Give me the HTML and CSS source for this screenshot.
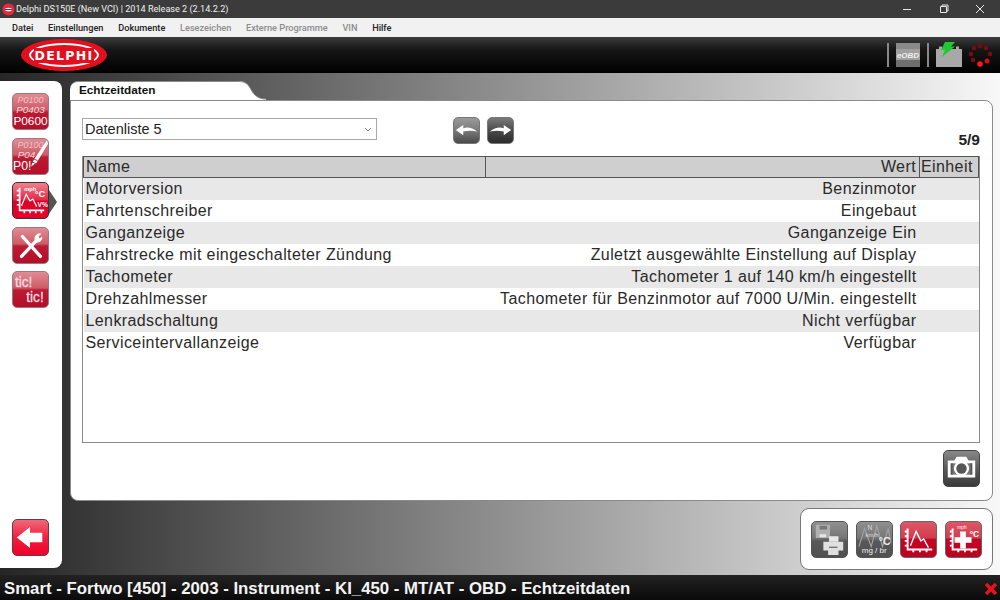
FILE: index.html
```html
<!DOCTYPE html>
<html lang="de">
<head>
<meta charset="utf-8">
<title>Delphi DS150E</title>
<link rel="stylesheet" href="styles.css">
</head>
<body>
<div class="app">
  <div class="titlebar">
    <svg class="appicon" width="13" height="13" viewBox="0 0 13 13"><circle cx="6.5" cy="6.5" r="6" fill="#e8283c"/><ellipse cx="6.5" cy="6.5" rx="3.6" ry="1.8" fill="#fff"/><rect x="3" y="6" width="7" height="1" fill="#c01020"/></svg>
    <span class="apptitle">Delphi DS150E (New VCI) | 2014 Release 2 (2.14.2.2)</span>
    <div class="winbtns">
      <svg width="10" height="10" viewBox="0 0 10 10"><path d="M1 5.500H9" stroke="#e8e8e8" fill="none"/></svg>
      <svg width="10" height="10" viewBox="0 0 10 10"><path d="M1.500 2.500h6v6h-6zM3 2.500V1h6v6H7.500" stroke="#e8e8e8" fill="none"/></svg>
      <svg width="10" height="10" viewBox="0 0 10 10"><path d="M1 1L9 9M9 1L1 9" stroke="#e8e8e8" fill="none"/></svg>
    </div>
  </div>
  <nav class="menubar">
    <span>Datei</span><span>Einstellungen</span><span>Dokumente</span><span class="off">Lesezeichen</span><span class="off">Externe Programme</span><span class="off">VIN</span><span>Hilfe</span>
  </nav>
  <header class="header">
    <div class="logo"><span>DELPHI</span></div>
    <div class="status">
      <i class="sep"></i>
      <div class="eobd"><span>eOBD</span></div>
      <i class="sep"></i>
      <svg width="26" height="26" viewBox="0 0 26 26"><path d="M0 7h3V4.500h3V7h14V4.500h3V7h3v18H0z" fill="#a8a8a8"/><path d="M9 0h10l-4 4.500h4L6 15l3-7H5z" fill="#22c832"/></svg>
      <svg class="spinner" width="24" height="24" viewBox="0 0 24 24"><g fill="#7a0c10"><circle cx="12" cy="3" r="2.300"/><circle cx="6" cy="5" r="2.300"/><circle cx="18" cy="5" r="2.300"/><circle cx="22" cy="11" r="2.300"/><circle cx="3" cy="11" r="2.300"/><circle cx="5" cy="17" r="2.300"/></g><circle cx="19" cy="18" r="2.500" fill="#d01014"/><circle cx="12" cy="21" r="2.800" fill="#ff1a1a"/></svg>
    </div>
  </header>
  <main class="workspace">
    <aside class="sidebar">
      <div class="sideicons">
        <div class="btn red"><svg viewBox="0 0 37 37"><text class="mid" x="18.500" y="10" font-size="9.500" fill="#eec0c6" font-style="italic">P0100</text><text class="mid" x="18.500" y="20.500" font-size="10.500" fill="#f4dade" font-style="italic">P0403</text><text class="mid" x="18.500" y="33" font-size="12.500" fill="#fff">P0600</text></svg></div>
        <div class="btn red"><svg viewBox="0 0 37 37"><text class="mid" x="18.500" y="10" font-size="9.500" fill="#eec0c6" font-style="italic">P0100</text><text class="sans" x="5" y="20.500" font-size="10.500" fill="#f4dade" font-style="italic">P04</text><text class="sans" x="0" y="33" font-size="13" fill="#fff">P0!</text><path d="M36 1L22 22l-3 7 6-4 12-20z" fill="#fff"/><path d="M20 24l4 2M22 21l4 2" stroke="#b03040" fill="none"/></svg></div>
        <div class="btn selected"><svg viewBox="0 0 37 37"><path d="M7 5V29H33M4 8H7M4 13H7M4 18H7M4 23H7M12 29v3M18 29v3M24 29v3M30 29v3" stroke="#fff" stroke-width="1.800" fill="none"/><path d="M9 24L14 12l4 7 3-2 4 8" stroke="#fff" stroke-width="1.300" fill="none"/><text class="sans" x="12" y="8" font-size="6" font-weight="700" fill="#fff">mph</text><text class="sans" x="23" y="15" font-size="10" font-weight="700" fill="#fff">°C</text><text class="sans" x="26" y="25" font-size="7" font-weight="700" fill="#fff">V%</text></svg></div>
        <div class="btn red"><svg viewBox="0 0 37 37"><path d="M10 9L29 30" stroke="#fff" stroke-width="3.500" stroke-linecap="round"/><path d="M26 12L9 30" stroke="#fff" stroke-width="3.500" stroke-linecap="round"/><path d="M23 13a5.500 5.500 0 0 1 7-7l-3 3 1 2 3-2a5.500 5.500 0 0 1-7 6z" fill="#fff"/></svg></div>
        <div class="btn red"><svg viewBox="0 0 37 37"><text class="sans" x="2" y="16" font-size="14.500" fill="#f6dde0" stroke="#f6dde0" stroke-width=".3">tic!</text><text class="sans" x="14" y="32" font-size="14.500" fill="#f6dde0" stroke="#f6dde0" stroke-width=".3">tic!</text></svg></div>
        <div class="pointer"></div>
      </div>
      <div class="btn back"><svg viewBox="0 0 37 37"><path d="M4 18.500L18 7.500v6h13v10H18v6z" fill="#fff"/></svg></div>
    </aside>
    <div class="content">
      <div class="tabrow">
        <div class="tab">Echtzeitdaten</div>
        <svg class="tabcurve" width="28" height="19" viewBox="0 0 28 20" preserveAspectRatio="none"><path d="M0 0C7 0 10 3 13 9S20 19 28 19V20H0z" fill="#fff"/><path d="M0 0.500C7 .5 10 3 13 9S20 19 28 19" fill="none" stroke="#8a8a8a"/></svg>
      </div>
      <section class="panel">
        <div class="controls">
          <div class="select"><span>Datenliste 5</span><svg width="8" height="5" viewBox="0 0 8 5"><path d="M1 1l3 3 3-3" stroke="#888" fill="none"/></svg></div>
          <div class="navbtns">
            <div class="btn nav"><svg viewBox="0 0 27 27"><path d="M2 13l8-5.500v3.500c5-1.500 10-.5 15 3.500-5-1-10-1-15 0v4z" fill="#fff"/></svg></div>
            <div class="btn nav darker"><svg viewBox="0 0 27 27"><path d="M25 13l-8-5.500v3.500c-5-1.500-10-.5-15 3.500 5-1 10-1 15 0v4z" fill="#fff"/></svg></div>
          </div>
          <div class="count">5/9</div>
        </div>
        <div class="tablewrap">
          <table class="grid">
            <thead><tr><th class="c1">Name</th><th class="c2">Wert</th><th class="c3">Einheit</th></tr></thead>
            <tbody>
              <tr><td>Motorversion</td><td class="v">Benzinmotor</td><td></td></tr>
              <tr><td>Fahrtenschreiber</td><td class="v">Eingebaut</td><td></td></tr>
              <tr><td>Ganganzeige</td><td class="v">Ganganzeige Ein</td><td></td></tr>
              <tr><td>Fahrstrecke mit eingeschalteter Zündung</td><td class="v">Zuletzt ausgewählte Einstellung auf Display</td><td></td></tr>
              <tr><td>Tachometer</td><td class="v">Tachometer 1 auf 140 km/h eingestellt</td><td></td></tr>
              <tr><td>Drehzahlmesser</td><td class="v">Tachometer für Benzinmotor auf 7000 U/Min. eingestellt</td><td></td></tr>
              <tr><td>Lenkradschaltung</td><td class="v">Nicht verfügbar</td><td></td></tr>
              <tr><td>Serviceintervallanzeige</td><td class="v">Verfügbar</td><td></td></tr>
            </tbody>
          </table>
        </div>
        <div class="panelfoot">
          <div class="btn dark"><svg viewBox="0 0 37 37"><path d="M11 10l2.500-4h10l2.500 4h7v18H4V10z" fill="#fff"/><path d="M7 13v12h2.500V13zM30 13v12h-2.500V13z" fill="#555"/><rect x="9" y="13" width="19" height="12" fill="#777"/><circle cx="18.500" cy="18.500" r="8" fill="#fff"/><circle cx="18.500" cy="18.500" r="5.500" fill="#555"/></svg></div>
        </div>
      </section>
      <div class="trayrow">
        <div class="tray">
          <div class="btn grey"><svg viewBox="0 0 37 37"><rect x="4" y="3" width="15" height="14" rx="1" fill="#b0b0b0"/><rect x="8" y="4" width="8" height="4" fill="#777"/><rect x="8" y="13" width="7" height="3" fill="#e6e6e6"/><path d="M18 15h10v6H18z" fill="#e8e8e8"/><path d="M12 21h21v9h-5v5H17v-5h-5z" fill="#e0e0e0"/><rect x="18" y="26" width="9" height="1.500" fill="#777"/></svg></div>
          <div class="btn grey"><svg viewBox="0 0 37 37"><path d="M2 26L8 7l7 19 6-22 6 22 6-19 3 15" stroke="#a0a0a0" stroke-width="1.300" fill="none"/><text class="sans" x="11" y="8" font-size="7" fill="#ddd">N</text><text class="sans" x="9" y="16" font-size="6.500" fill="#ddd">km/h</text><text class="sans" x="23" y="24" font-size="11" font-weight="700" fill="#eee">°C</text><text class="sans" x="5" y="33" font-size="8.500" fill="#eee">mg / br</text></svg></div>
          <div class="btn red flat"><svg viewBox="0 0 37 37"><path d="M7 7V29H33M4 10H7M4 15H7M4 20H7M4 25H7M13 29v3M20 29v3M27 29v3" stroke="#fff" stroke-width="2" fill="none"/><path d="M10 25L16 10l5 10 3-2 5 9" stroke="#fff" stroke-width="1.500" fill="none"/></svg></div>
          <div class="btn red flat"><svg viewBox="0 0 37 37"><path d="M7 7V29H33M4 10H7M4 15H7M4 20H7M4 25H7M13 29v3M20 29v3M27 29v3" stroke="#fff" stroke-width="2" fill="none"/><path d="M15 10h6v6h6v6h-6v6h-6v-6H9v-6h6z" fill="#fff"/><text class="sans" x="25" y="16" font-size="9" font-weight="700" fill="#fff">°C</text><text class="sans" x="12" y="7" font-size="5" fill="#fff">mph</text></svg></div>
        </div>
      </div>
    </div>
  </main>
  <footer class="footer">
    <span>Smart - Fortwo [450] - 2003 - Instrument - KI_450 - MT/AT - OBD - Echtzeitdaten</span>
    <svg width="14" height="14" viewBox="0 0 14 14"><path d="M2 2L12 12M12 2L2 12" stroke="#e8141c" stroke-width="3.500"/></svg>
  </footer>
</div>
</body>
</html>
```

FILE: styles.css
```css
* { box-sizing: border-box; }
html, body { margin: 0; padding: 0; }
body { width: 1000px; height: 600px; overflow: hidden; font-family: "Liberation Sans", Arial, sans-serif; }
.app { display: flex; flex-direction: column; width: 1000px; height: 600px; }

.titlebar { flex: 0 0 18px; display: flex; align-items: center; padding: 0 0 0 2px; background: #3b3b3b; color: #f0f0f0; font: 9.100px Roboto, sans-serif; }
.appicon { margin-right: 1px; }
.apptitle { white-space: nowrap; }
.winbtns { margin-left: auto; display: flex; gap: 26.500px; padding-right: 15px; }

.menubar { flex: 0 0 19px; display: flex; align-items: center; gap: 14.700px; padding-left: 12px; background: #f1f1f1; color: #222; font: 500 9.200px Roboto, sans-serif; white-space: nowrap; }
.menubar .off { color: #8c8c8c; }

.header { flex: 0 0 36px; display: flex; align-items: center; justify-content: space-between; padding: 0 8px 0 21px; background: linear-gradient(#3c3c3c 0, #161616 35%, #000 100%); }
.logo { width: 86px; height: 32px; border-radius: 50%; background: #e2101e; display: flex; align-items: center; justify-content: center; position: relative; }
.logo::before { content: ""; position: absolute; left: 8px; right: 8px; top: 4px; bottom: 4px; border: 2px solid #fff; border-radius: 50%; }
.logo span { position: relative; padding: 0 1px; background: #e2101e; color: #fff; font: 700 12.500px "DejaVu Sans", sans-serif; letter-spacing: 1.300px; }
.status { display: flex; align-items: center; gap: 7px; }
.sep { width: 2px; height: 24px; background: #888; }
.eobd { width: 24px; height: 24px; background: linear-gradient(#8a8a8a 0 25%, #a0a0a0 25% 70%, #6e6e6e 70%); display: flex; align-items: center; justify-content: center; color: #eee; font-size: 8px; font-weight: 700; font-style: italic; }
.spinner { margin-left: -1px; }

.workspace { flex: 1 1 auto; min-height: 0; display: flex; gap: 8px; padding: 8px 7px 7px 0; background: linear-gradient(90deg, #262626, #f8f8f8); }

.sidebar { flex: 0 0 62px; display: flex; flex-direction: column; justify-content: space-between; padding: 12px 13px 12px 12px; background: #fff; border-radius: 0 8px 8px 0; }
.sideicons { display: flex; flex-direction: column; gap: 7.500px; position: relative; }
.pointer { position: absolute; left: 37px; top: 97px; width: 0; height: 0; border-left: 8px solid #555; border-top: 12px solid transparent; border-bottom: 12px solid transparent; }

.btn { flex: none; width: 37px; height: 37px; border-radius: 5px; overflow: hidden; border: 1px solid #9a7a7e; }
.btn svg { display: block; width: 100%; height: 100%; }
.sans { font-family: "Liberation Sans", Arial, sans-serif; }
.mid { font-family: "Liberation Sans", Arial, sans-serif; text-anchor: middle; }
.red { background: linear-gradient(#e08c94 0, #cf5b68 45%, #bd1a34 52%, #b40e28 100%); }
.red.flat { background: linear-gradient(#dc5866 0, #d23c50 45%, #c40424 50%, #bc0020 100%); border-color: #666; }
.selected { background: linear-gradient(#f08090 0, #e62846 48%, #dc0024 52%, #e8002a 100%); border: 1.500px solid #333; }
.back { background: linear-gradient(#f06878 0, #f02040 50%, #f0002a 100%); border-color: #6a3a40; }
.nav { width: 27px; height: 27px; background: linear-gradient(#9a9a9a 0, #7a7a7a 50%, #4a4a4a 100%); border-color: #777; }
.nav.darker { background: linear-gradient(#7a7a7a 0, #4a4a4a 50%, #2c2c2c 100%); }
.dark { background: linear-gradient(#888 0, #5c5c5c 50%, #3a3a3a 100%); border-color: #444; }
.grey { background: linear-gradient(#909090 0, #767676 45%, #585858 55%, #505050 100%); border-color: #555; }

.content { flex: 1 1 auto; min-width: 0; display: flex; flex-direction: column; }
.tabrow { flex: 0 0 18px; display: flex; position: relative; z-index: 1; }
.tab { width: 168px; height: 19px; padding: 1px 0 0 9px; background: #fff; border-radius: 8px 0 0 0; border-top: 1px solid #8a8a8a; color: #111; font-size: 11.750px; font-weight: 700; }
.tabcurve { flex: none; }

.panel { flex: 0 0 401px; display: flex; flex-direction: column; padding: 0 12px 12px 11px; background: #fff; border: 1px solid #8a8a8a; border-radius: 0 8px 8px 8px; }
.controls { flex: 0 0 55px; display: flex; align-items: flex-start; padding-top: 17px; position: relative; }
.select { width: 295px; height: 22px; display: flex; align-items: center; justify-content: space-between; padding: 0 4px 0 2px; border: 1px solid #a8a8a8; color: #222; font-size: 14.500px; }
.navbtns { display: flex; gap: 7px; margin-left: 76px; margin-top: -1px; }
.count { margin-left: auto; align-self: flex-end; color: #222; font-size: 15.500px; font-weight: 700; padding-bottom: 7px; }

.tablewrap { flex: 0 0 287px; border: 1px solid #8a8a8a; border-top: 0; }
.grid { width: 100%; border-collapse: collapse; table-layout: fixed; font-size: 16px; letter-spacing: .4px; color: #2a2a2a; }
.grid th { height: 21px; padding: 0 3px 1px 2px; background: #cfcfcf; border: 1px solid #555; font-weight: 400; text-align: right; white-space: nowrap; overflow: hidden; }
.grid th.c1 { width: 402px; text-align: left; }
.grid th.c3 { width: 59px; text-align: left; padding-left: 1px; }
.grid td { height: 22px; padding: 0 3px 0 2px; white-space: nowrap; }
.grid td.v { text-align: right; }
.grid tbody tr:nth-child(odd) { background: #e8e8e8; }

.panelfoot { display: flex; justify-content: flex-end; padding-top: 7px; }

.trayrow { display: flex; justify-content: flex-end; padding-top: 7px; }
.tray { width: 193px; height: 62px; display: flex; align-items: center; gap: 7.500px; padding: 0 0 0 10px; background: #fff; border: 1px solid #777; border-radius: 9px; }

.footer { flex: 0 0 25px; display: flex; align-items: center; justify-content: space-between; padding: 2px 2px 0 4px; background: linear-gradient(#222, #0a0a0a); color: #f4f4f4; font-size: 16.800px; font-weight: 700; white-space: nowrap; }
```
